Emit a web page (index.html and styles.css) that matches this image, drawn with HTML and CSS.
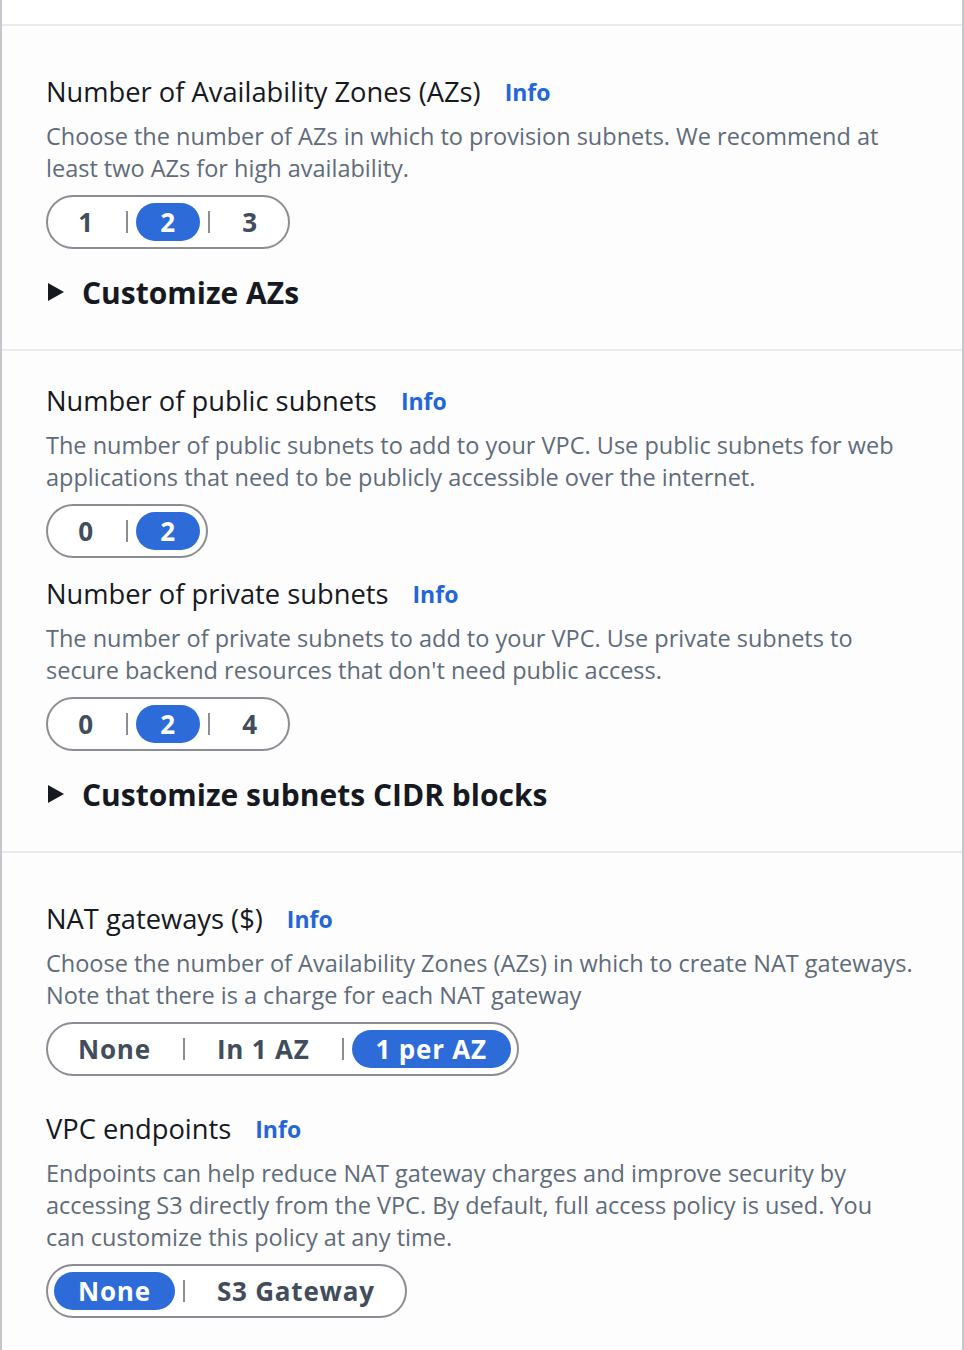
FILE: index.html
```html
<!DOCTYPE html>
<html lang="en">
<head>
<meta charset="utf-8">
<title>VPC settings</title>
<link rel="stylesheet" href="styles.css">
</head>
<body>
<div class="panel">
  <div class="top-strip"></div>

  <section class="section sec-az">
    <div class="field">
      <div class="label-row"><span class="label">Number of Availability Zones (AZs)</span><a class="info" href="#">Info</a></div>
      <p class="desc">Choose the number of AZs in which to provision subnets. We recommend at least two AZs for high availability.</p>
      <div class="seg">
        <span class="opt">1</span><span class="sep"></span><span class="opt on">2</span><span class="sep"></span><span class="opt">3</span>
      </div>
    </div>
    <div class="expander"><span class="tri"></span><span class="exp-text">Customize AZs</span></div>
  </section>

  <section class="section sec-subnets">
    <div class="field">
      <div class="label-row"><span class="label">Number of public subnets</span><a class="info" href="#">Info</a></div>
      <p class="desc">The number of public subnets to add to your VPC. Use public subnets for web applications that need to be publicly accessible over the internet.</p>
      <div class="seg">
        <span class="opt">0</span><span class="sep"></span><span class="opt on">2</span>
      </div>
    </div>
    <div class="field field-next">
      <div class="label-row"><span class="label">Number of private subnets</span><a class="info" href="#">Info</a></div>
      <p class="desc">The number of private subnets to add to your VPC. Use private subnets to secure backend resources that don't need public access.</p>
      <div class="seg">
        <span class="opt">0</span><span class="sep"></span><span class="opt on">2</span><span class="sep"></span><span class="opt">4</span>
      </div>
    </div>
    <div class="expander"><span class="tri"></span><span class="exp-text">Customize subnets CIDR blocks</span></div>
  </section>

  <section class="section sec-nat">
    <div class="field">
      <div class="label-row"><span class="label">NAT gateways ($)</span><a class="info" href="#">Info</a></div>
      <p class="desc">Choose the number of Availability Zones (AZs) in which to create NAT gateways. Note that there is a charge for each NAT gateway</p>
      <div class="seg">
        <span class="opt">None</span><span class="sep"></span><span class="opt">In 1 AZ</span><span class="sep"></span><span class="opt on">1 per AZ</span>
      </div>
    </div>
    <div class="field field-far">
      <div class="label-row"><span class="label">VPC endpoints</span><a class="info" href="#">Info</a></div>
      <p class="desc">Endpoints can help reduce NAT gateway charges and improve security by accessing S3 directly from the VPC. By default, full access policy is used. You can customize this policy at any time.</p>
      <div class="seg">
        <span class="opt on">None</span><span class="sep"></span><span class="opt">S3 Gateway</span>
      </div>
    </div>
  </section>
</div>
</body>
</html>
```

FILE: styles.css
```css
* { box-sizing: border-box; }

html, body {
  margin: 0;
  padding: 0;
  background: #ffffff;
}

body {
  font-family: "Open Sans", "Noto Sans", Arial, sans-serif;
  color: #16191f;
}

.panel {
  width: 964px;
  min-height: 1350px;
  border-left: 2px solid #c6c6cd;
  border-right: 2px solid #c6c6cd;
  background: #fdfdfd;
}

.top-strip {
  height: 24px;
  background: #ffffff;
}

.section {
  border-top: 2px solid #e9ebed;
  padding: 0 44px;
}

.sec-az { padding-top: 50px; padding-bottom: 39px; }
.sec-subnets { padding-top: 34px; padding-bottom: 39px; }
.sec-nat { padding-top: 50px; padding-bottom: 30px; }

.label-row {
  display: flex;
  align-items: center;
  height: 32px;
}

.label {
  font-size: 27.3px;
  line-height: 32px;
  color: #16191f;
}

.info {
  margin-left: 24px;
  font-size: 23px;
  font-weight: 700;
  color: #2366d8;
  text-decoration: none;
  line-height: 32px;
}

.desc {
  margin: 12px 0 0;
  font-size: 23.5px;
  line-height: 32px;
  color: #5f6b7a;
  max-width: 868px;
}

.seg {
  display: inline-flex;
  align-items: center;
  margin-top: 11px;
  height: 54px;
  padding: 6px;
  border: 2px solid #8c8c94;
  border-radius: 27px;
  background: #ffffff;
}

.opt {
  min-width: 64px;
  height: 38px;
  padding: 0 24px;
  display: flex;
  align-items: center;
  justify-content: center;
  border-radius: 19px;
  font-size: 26px;
  letter-spacing: 0.8px;
  font-weight: 700;
  color: #414d5c;
}

.opt.on {
  background: #2d6bd9;
  color: #ffffff;
}

.sep {
  width: 2px;
  height: 22px;
  margin: 0 8px;
  background: #8c8c94;
}

.field-next { margin-top: 20px; }
.field-far { margin-top: 37px; }

.expander {
  display: flex;
  align-items: center;
  margin-top: 25px;
  height: 36px;
}

.tri {
  width: 0;
  height: 0;
  margin-left: 2px;
  border-top: 9px solid transparent;
  border-bottom: 9px solid transparent;
  border-left: 16px solid #16191f;
}

.exp-text {
  margin-left: 18px;
  font-size: 30px;
  font-weight: 700;
  color: #16191f;
}
```
